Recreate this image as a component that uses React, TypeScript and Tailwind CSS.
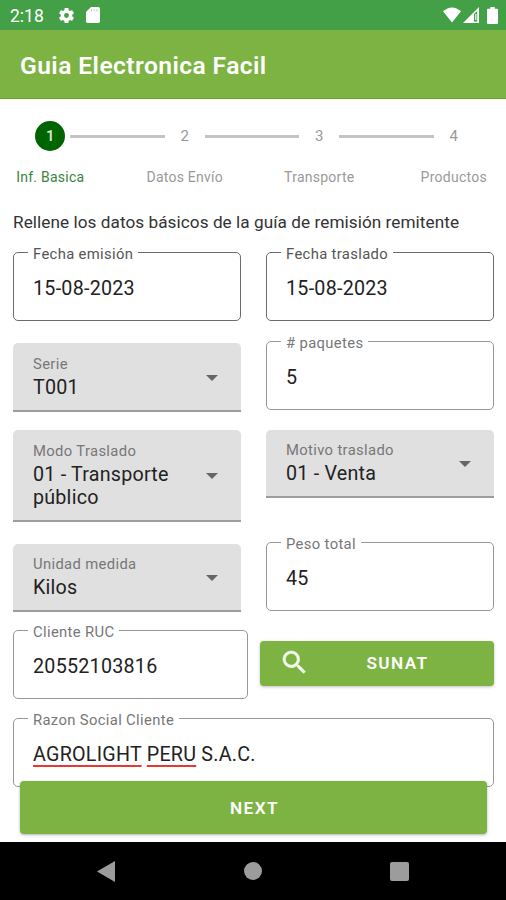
import { useState, type ReactNode } from 'react';
import { clsx } from 'clsx';

const STEPS = ['Inf. Basica', 'Datos Envío', 'Transporte', 'Productos'];

interface FieldProps {
  label: string;
  children: ReactNode;
  dark?: boolean;
  className?: string;
}

// Outlined text field, the legend cuts the notch in the border
function OutlinedField({ label, children, dark = false, className }: FieldProps) {
  return (
    <fieldset
      className={clsx(
        'h-[75px] min-w-0 rounded-[5px] border pl-[14px]',
        dark ? 'border-[#6c6c6c]' : 'border-[#979797]',
        className
      )}
    >
      <legend
        className={clsx(
          'h-[13px] px-[5px] text-[14.8px] leading-[17px] tracking-[0.35px] whitespace-nowrap',
          dark ? 'text-[#555]' : 'text-[#777]'
        )}
      >
        {label}
      </legend>
      <div className="px-[5px] pt-[17px] text-[19.7px] leading-[25px] tracking-[0.25px] whitespace-nowrap text-[#222]">
        {children}
      </div>
    </fieldset>
  );
}

// Filled dropdown
function SelectField({ label, children, className }: FieldProps) {
  return (
    <div
      className={clsx(
        'flex items-center rounded-t-[5px] border-b-2 border-[#9c9c9c] bg-[#e0e0e0] pr-[23px] pl-[20px]',
        className
      )}
    >
      <div className="flex-1">
        <div className="text-[14.8px] leading-[18px] tracking-[0.35px] text-[#777]">{label}</div>
        <div className="pt-[3px] text-[19.7px] leading-[23px] tracking-[0.22px] text-[#222]">{children}</div>
      </div>
      <svg width="12" height="6" viewBox="0 0 12 6" className="mt-[2px] fill-[#666]">
        <path d="M0 0h12L6 6z" />
      </svg>
    </div>
  );
}

function StatusBar() {
  return (
    <div className="flex h-[30px] items-center justify-between bg-[#43a047] pr-[8px] pl-[10px] text-white">
      <div className="flex items-center">
        <span className="w-[47px] pt-[1px] text-[17.5px] leading-[30px]">2:18</span>
        <svg width="19" height="19" viewBox="0 0 24 24" fill="currentColor">
          <path d="M19.14 12.94c.04-.3.06-.61.06-.94 0-.32-.02-.64-.07-.94l2.03-1.58c.18-.14.23-.41.12-.61l-1.92-3.32c-.12-.22-.37-.29-.59-.22l-2.39.96c-.5-.38-1.03-.7-1.62-.94l-.36-2.54c-.04-.24-.24-.41-.48-.41h-3.84c-.24 0-.43.17-.47.41l-.36 2.54c-.59.24-1.13.57-1.62.94l-2.39-.96c-.22-.08-.47 0-.59.22L2.74 8.87c-.12.21-.08.47.12.61l2.03 1.58c-.05.3-.09.63-.09.94s.02.64.07.94l-2.03 1.58c-.18.14-.23.41-.12.61l1.92 3.32c.12.22.37.29.59.22l2.39-.96c.5.38 1.03.7 1.62.94l.36 2.54c.05.24.24.41.48.41h3.84c.24 0 .44-.17.47-.41l.36-2.54c.59-.24 1.13-.56 1.62-.94l2.39.96c.22.08.47 0 .59-.22l1.92-3.32c.12-.22.07-.47-.12-.61l-2.01-1.58zM12 15.1A3.1 3.1 0 1 1 12 8.9a3.1 3.1 0 0 1 0 6.2z" />
        </svg>
        <svg width="14" height="16" viewBox="0 0 14 16" className="ml-[10px]">
          <path fill="currentColor" d="M5 0h7.3Q14 0 14 1.7v12.6q0 1.7-1.7 1.7H1.7Q0 16 0 14.3V5z" />
          <path stroke="#b4d8b6" strokeWidth="1" d="M5.5 2v2.5M8.2 2v2.5M10.9 2v2.5" />
        </svg>
      </div>
      <div className="flex items-center">
        <svg width="18" height="16" viewBox="0 0 18 16" fill="currentColor">
          <path d="M0 4.2Q9-3.4 18 4.2L9 15.5z" />
        </svg>
        <svg width="16" height="16" viewBox="0 0 16 16" className="ml-[2px]">
          <path fill="currentColor" fillRule="evenodd" d="M0 16L16 0v16zM11 7.2v7.3h3.2V4z" />
          <path fill="currentColor" d="M12.2 7h1.2v6h-1.2z" />
        </svg>
        <svg width="11" height="17" viewBox="0 0 11 17" fill="currentColor" className="ml-[8px]">
          <path d="M3.3 0h4.4v1.8H10q1 0 1 1V16q0 1-1 1H1q-1 0-1-1V2.8q0-1 1-1h2.3z" />
        </svg>
      </div>
    </div>
  );
}

function Stepper({ current }: { current: number }) {
  return (
    <div className="-ml-[30px] grid h-[104px] w-[538px] grid-cols-4 pt-[22px]">
      {STEPS.map((step, i) => (
        <div key={step} className="flex flex-col items-center">
          <div className="flex h-[30px] w-full items-center">
            <div className={clsx('h-[3px] flex-1', i > 0 && 'bg-[#c4c4c4]')} />
            <div
              className={clsx(
                'mx-[5px] flex size-[30px] items-center justify-center rounded-full text-[15px]',
                i === current ? 'bg-[#006400] font-medium text-[#dcebdc]' : 'text-[#999]'
              )}
            >
              {i + 1}
            </div>
            <div className={clsx('h-[3px] flex-1', i < STEPS.length - 1 && 'bg-[#c4c4c4]')} />
          </div>
          <div
            className={clsx(
              'mt-[17px] text-[14px] leading-[18px] tracking-[0.25px]',
              i === current ? 'text-[#3c843c]' : 'text-[#999]'
            )}
          >
            {step}
          </div>
        </div>
      ))}
    </div>
  );
}

function NavBar() {
  return (
    <div className="flex h-[58px] items-center justify-between bg-black px-[97px]">
      <svg width="18" height="21" viewBox="0 0 18 21" className="fill-[#9c9c9c]">
        <path d="M0 10.5L18 0v21z" />
      </svg>
      <div className="size-[18px] rounded-full bg-[#9c9c9c]" />
      <div className="size-[19px] rounded-[2px] bg-[#9c9c9c]" />
    </div>
  );
}

export default function App() {
  const [step, setStep] = useState(0);

  return (
    <div className="flex h-[900px] w-[506px] flex-col overflow-hidden bg-white font-['Roboto',sans-serif]">
      <StatusBar />
      <header className="flex h-[69px] items-center border-b border-[#6da52c] bg-[#7cb342] pl-[20px]">
        <h1 className="pt-[3px] text-[24.6px] leading-[30px] font-semibold tracking-[0.42px] text-white">
          Guia Electronica Facil
        </h1>
      </header>

      <main className="relative h-[743px] overflow-hidden pr-[12px] pl-[13px]">
        <Stepper current={step} />
        <p className="mt-[7px] mb-[12px] text-[17.2px] leading-[24px] tracking-[0.05px] whitespace-nowrap text-[#333]">
          Rellene los datos básicos de la guía de remisión remitente
        </p>

        <div className="grid grid-cols-2 gap-x-[25px]">
          <OutlinedField label="Fecha emisión" dark>15-08-2023</OutlinedField>
          <OutlinedField label="Fecha traslado" dark>15-08-2023</OutlinedField>
        </div>
        <div className="mt-[14px] grid grid-cols-2 items-start gap-x-[25px]">
          <SelectField label="Serie" className="mt-[8px] h-[69px]">T001</SelectField>
          <OutlinedField label="# paquetes">5</OutlinedField>
        </div>
        <div className="mt-[18px] grid grid-cols-2 items-start gap-x-[25px]">
          <SelectField label="Modo Traslado" className="h-[92px]">01 - Transporte público</SelectField>
          <SelectField label="Motivo traslado" className="h-[68px]">01 - Venta</SelectField>
        </div>
        <div className="mt-[14px] grid grid-cols-2 items-start gap-x-[25px]">
          <SelectField label="Unidad medida" className="mt-[8px] h-[68px]">Kilos</SelectField>
          <OutlinedField label="Peso total">45</OutlinedField>
        </div>
        <div className="mt-[12px] flex gap-[12px]">
          <OutlinedField label="Cliente RUC" className="w-[235px]">20552103816</OutlinedField>
          <button
            type="button"
            className="mt-[17px] flex h-[45px] flex-1 items-center rounded-[4px] bg-[#7cb342] pt-px pr-[9px] pl-[19px] text-white shadow-[0_1px_3px_rgba(0,0,0,0.25)]"
          >
            <svg width="31" height="31" viewBox="0 0 24 24" className="-mt-[3px] fill-[#f4faed] stroke-[#f4faed] stroke-[0.4]">
              <path d="M15.5 14h-.79l-.28-.27A6.471 6.471 0 0 0 16 9.5 6.5 6.5 0 1 0 9.5 16c1.61 0 3.09-.59 4.23-1.57l.27.28v.79l5 4.99L20.49 19l-4.99-5zm-6 0C7.01 14 5 11.99 5 9.5S7.01 5 9.5 5 14 7.01 14 9.5 11.99 14 9.5 14z" />
            </svg>
            <span className="flex-1 text-center text-[17.2px] font-semibold tracking-[1.4px]">SUNAT</span>
          </button>
        </div>
        <OutlinedField label="Razon Social Cliente" className="mt-[13px]">
          <span className="underline decoration-[#e53935] decoration-2 underline-offset-[4px]">AGROLIGHT</span>{' '}
          <span className="underline decoration-[#e53935] decoration-2 underline-offset-[4px]">PERU</span> S.A.C.
        </OutlinedField>

        <button
          type="button"
          onClick={() => setStep(s => Math.min(s + 1, STEPS.length - 1))}
          className="absolute bottom-[8px] left-[20px] h-[53px] w-[467px] rounded-[4px] bg-[#7cb342] pt-[2px] pl-[2px] text-[17.2px] font-semibold tracking-[1.4px] text-white shadow-[0_1px_3px_rgba(0,0,0,0.3)]"
        >
          NEXT
        </button>
      </main>

      <NavBar />
    </div>
  );
}
